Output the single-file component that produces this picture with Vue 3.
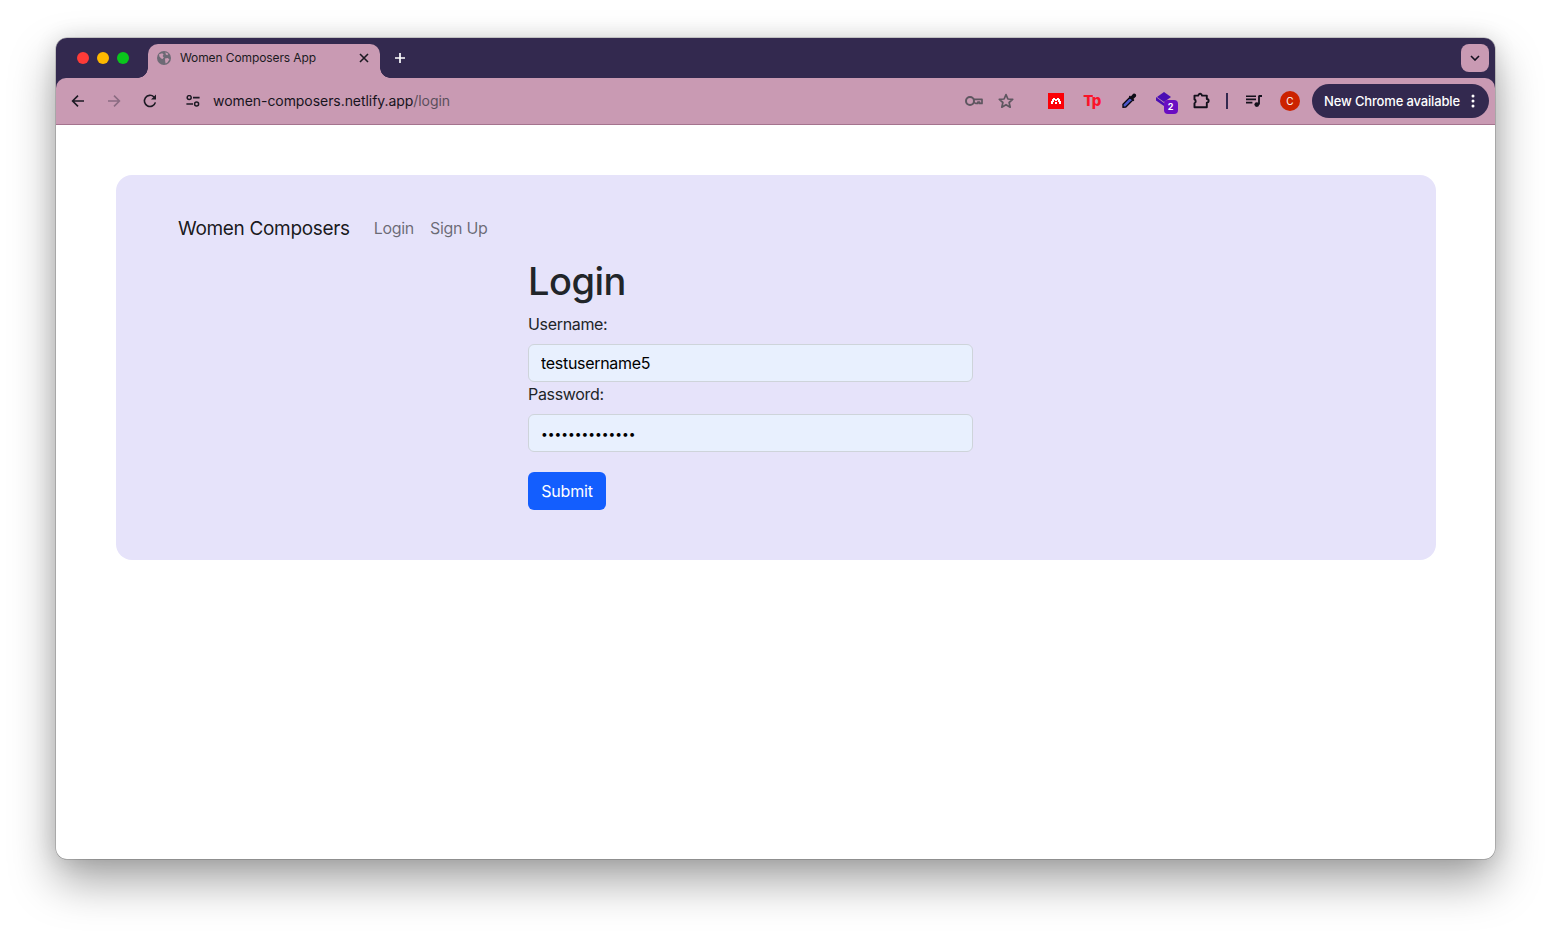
<script setup>
const title = 'Women Composers App'
</script>

<template>
  <div class="page">
    <div class="window">
      <div class="strip">
        <div class="lights">
          <span class="light red"></span>
          <span class="light yellow"></span>
          <span class="light green"></span>
        </div>
        <div class="tab">
          <svg class="globe" viewBox="0 0 14 14" width="14" height="14">
            <circle cx="7" cy="7" r="7" fill="#6d6a75" />
            <path d="M2 3.2 L5.2 2.2 L6.6 3.4 L5.6 5 L6.8 6.4 L5.6 8 L4.2 7.6 L2.4 5.6 Z M8.4 1.2 L11.4 2.8 L10.4 4.2 L8.8 3.6 Z M8 7.4 L10.8 7 L12.4 8.6 L10.4 11.6 L8.6 12.6 L8.2 10.4 Z" fill="#c99ab3" />
          </svg>
          <span class="tab-title">{{ title }}</span>
          <svg class="tab-close" viewBox="0 0 10 10" width="10" height="10">
            <path d="M1 1 L9 9 M9 1 L1 9" stroke="#1c1a22" stroke-width="1.6" fill="none" />
          </svg>
        </div>
        <svg class="plus" viewBox="0 0 12 12" width="12" height="12">
          <path d="M6 1 V11 M1 6 H11" stroke="#fff" stroke-width="1.7" fill="none" />
        </svg>
        <div class="chevron">
          <svg viewBox="0 0 10 6" width="10" height="6">
            <path d="M1 1 L5 5 L9 1" stroke="#14101f" stroke-width="1.6" fill="none" />
          </svg>
        </div>
      </div>

      <div class="toolbar">
        <span class="tool">
          <svg viewBox="0 0 14 14" width="14" height="14"><path d="M13 7 H2 M7 1.6 L1.6 7 L7 12.4" stroke="#1d1a24" stroke-width="1.6" fill="none" /></svg>
        </span>
        <span class="tool">
          <svg viewBox="0 0 14 14" width="14" height="14"><path d="M1 7 H12 M7 1.6 L12.4 7 L7 12.4" stroke="#8b6b82" stroke-width="1.6" fill="none" /></svg>
        </span>
        <span class="tool">
          <svg viewBox="0 0 14 14" width="14" height="14"><path d="M12.4 8.4 A5.6 5.6 0 1 1 11 3" stroke="#1d1a24" stroke-width="1.6" fill="none" /><path d="M13 .6 V5.6 H8 Z" fill="#1d1a24" /></svg>
        </span>
        <span class="tune">
          <svg viewBox="0 0 14 12" width="14" height="12">
            <circle cx="3.2" cy="2.6" r="2" stroke="#1d1a24" stroke-width="1.5" fill="none" />
            <path d="M7 2.6 H13.6 M0.4 9 H7" stroke="#1d1a24" stroke-width="1.6" fill="none" />
            <circle cx="10.6" cy="9" r="2" stroke="#1d1a24" stroke-width="1.5" fill="none" />
          </svg>
        </span>
        <span class="url">women-composers.netlify.app<span class="url-path">/login</span></span>

        <span class="tool key">
          <svg viewBox="0 0 18 10" width="18" height="10">
            <circle cx="5" cy="5" r="4" stroke="#5e5660" stroke-width="2" fill="none" />
            <path d="M9 3.4 H17 V7.4 H14.6 V6.2 H12.8 V7.4 H10.6 L9 6.4" stroke="#5e5660" stroke-width="1.7" fill="none" stroke-linejoin="round" />
          </svg>
        </span>
        <span class="tool star">
          <svg viewBox="0 0 16 16" width="16" height="16">
            <path d="M8 1.6 L9.9 6 L14.7 6.4 L11.1 9.5 L12.2 14.2 L8 11.7 L3.8 14.2 L4.9 9.5 L1.3 6.4 L6.1 6 Z" stroke="#5e5660" stroke-width="1.7" fill="none" stroke-linejoin="round" />
          </svg>
        </span>
        <span class="tool ext-first">
          <svg viewBox="0 0 16 16" width="16" height="16" shape-rendering="crispEdges">
            <rect width="16" height="16" fill="#fb0007" />
            <path d="M5 5 H7 V6 H9 V5 H11 V6 H12 V8 H13 V11 H11 V9 H10 V7 H9 V8 H7 V7 H6 V9 H5 V11 H3 V8 H4 V6 H5 Z M7 9 H9 V11 H7 Z" fill="#fff" />
          </svg>
        </span>
        <span class="tool tp">Tp</span>
        <span class="tool shift1">
          <svg viewBox="0 0 16 16" width="16" height="16">
            <path d="M9 4.2 L11.8 7 L4.8 14 L2 14.4 L2 11.2 Z" fill="#4a55c8" stroke="#0e0c16" stroke-width="1.4" stroke-linejoin="round" />
            <path d="M7.8 3.6 L12.4 8.2 L13.4 7 L12.4 6 L15 3.4 A2 2 0 0 0 12.2 .8 L9.8 3.4 L9 2.4 Z" fill="#0e0c16" />
          </svg>
        </span>
        <span class="tool shift2">
          <span class="stack">
            <svg viewBox="0 0 16 14" width="16" height="14">
              <path d="M8 0 L15 5 L8 10 L1 5 Z" fill="#4a0db4" />
              <path d="M0 5 L8 11 L8 14 L0 8.5 Z" fill="#4a0db4" />
            </svg>
            <span class="badge">2</span>
          </span>
        </span>
        <span class="tool shift1">
          <svg viewBox="0 0 16 16" width="17" height="17">
            <path d="M1.4 3.4 H5 A1.7 1.7 0 1 1 8.4 3.4 H13 V6.6 A1.7 1.7 0 1 1 13 10 V14.4 H1.4 V10.6 A2 2 0 0 0 1.4 7 Z" stroke="#14101c" stroke-width="1.8" fill="none" stroke-linejoin="round" />
          </svg>
        </span>
        <span class="divider-box"><span class="divider"></span></span>
        <span class="tool">
          <svg viewBox="0 0 16 12" width="16" height="12">
            <path d="M0 1.2 H10 M0 4.4 H10 M0 7.6 H6.4" stroke="#14101c" stroke-width="1.6" fill="none" />
            <path d="M13 1 H16 M13 0.6 V9.6" stroke="#14101c" stroke-width="1.8" fill="none" />
            <circle cx="10.8" cy="9.6" r="2.4" fill="#14101c" />
          </svg>
        </span>
        <span class="tool">
          <span class="avatar">C</span>
        </span>
        <div class="update">
          <span>New Chrome available</span>
          <svg viewBox="0 0 4 14" width="4" height="14">
            <circle cx="2" cy="2" r="1.5" fill="#fff" />
            <circle cx="2" cy="7" r="1.5" fill="#fff" />
            <circle cx="2" cy="12" r="1.5" fill="#fff" />
          </svg>
        </div>
      </div>

      <div class="content">
        <div class="card">
          <nav class="nav">
            <a class="brand">Women Composers</a>
            <a class="link">Login</a>
            <a class="link">Sign Up</a>
          </nav>
          <form class="form" @submit.prevent>
            <h1>Login</h1>
            <label for="username">Username:</label>
            <input id="username" type="text" value="testusername5" />
            <label for="password">Password:</label>
            <input id="password" type="password" value="abcdefghijklmn" />
            <button type="submit">Submit</button>
          </form>
        </div>
      </div>
    </div>
  </div>
</template>

<style>
html, body { margin: 0; background: #fff; }
</style>

<style scoped>
* { box-sizing: border-box; }
.page {
  width: 1551px;
  height: 933px;
  padding: 38px 56px 74px;
  background: #fff;
  overflow: hidden;
  font-family: Inter, "Liberation Sans", sans-serif;
}
.window {
  width: 1439px;
  height: 821px;
  border-radius: 11px;
  background: #fff;
  display: flex;
  flex-direction: column;
  overflow: hidden;
  box-shadow: 0 0 0 .5px rgba(0,0,0,.3), 0 22px 46px rgba(0,0,0,.36), 0 0 22px rgba(0,0,0,.12);
}
.strip {
  position: relative;
  height: 50px;
  margin-bottom: -10px;
  flex: none;
  background: #33294f;
  display: flex;
  align-items: flex-start;
  padding-top: 6px;
}
.lights {
  display: flex;
  gap: 8px;
  margin: 8px 0 0 21px;
}
.light { width: 12px; height: 12px; border-radius: 50%; }
.red { background: #fe3b38; }
.yellow { background: #feb900; }
.green { background: #0ac61c; }
.tab {
  position: relative;
  z-index: 2;
  width: 232px;
  height: 34px;
  margin-left: 19px;
  background: #c99ab3;
  border-radius: 10px 10px 0 0;
  display: flex;
  align-items: center;
  padding: 0 11px 6px 9px;
  color: #1c1a22;
  font-size: 12px;
}
.tab::before, .tab::after {
  content: "";
  position: absolute;
  bottom: 0;
  width: 10px;
  height: 10px;
  background: radial-gradient(circle at var(--cx) 0, #33294f 9.5px, #c99ab3 10px);
}
.tab::before { left: -10px; --cx: 0; }
.tab::after { right: -10px; --cx: 100%; }
.globe { flex: none; }
.tab-title { margin-left: 9px; flex: 1; white-space: nowrap; letter-spacing: -.1px; margin-top: -2px; }
.plus { margin: 8px 0 0 14px; }
.chevron {
  margin-left: auto;
  margin-right: 6px;
  width: 28px;
  height: 28px;
  border-radius: 8px;
  background: #c99ab3;
  display: flex;
  align-items: center;
  justify-content: center;
}
.toolbar {
  position: relative;
  z-index: 1;
  height: 47px;
  flex: none;
  background: #c99ab3;
  border-bottom: 1px solid #a4738e;
  border-radius: 10px 10px 0 0;
  display: flex;
  align-items: center;
  padding: 0 6px 1px 4px;
}
.tool {
  width: 36px;
  height: 32px;
  flex: none;
  display: flex;
  align-items: center;
  justify-content: center;
}
.tune {
  width: 14px;
  height: 12px;
  margin-left: 18px;
  display: flex;
  flex: none;
}
.url {
  flex: 1;
  margin-left: 13px;
  font-size: 14px;
  letter-spacing: -.06px;
  color: #17141d;
  white-space: nowrap;
}
.url-path { color: #5b4f5c; }
.key { width: 36px; margin-right: -2px; }
.star { width: 32px; margin-right: 16px; }
.tp {
  font-weight: 800;
  font-size: 15px;
  letter-spacing: -.8px;
  color: #fb1328;
}
.shift1 { padding-left: 2px; }
.shift2 { padding-left: 3px; }
.stack { position: relative; display: block; width: 16px; height: 14px; margin-left: -4px; margin-top: -4px; }
.stack svg { display: block; }
.badge {
  position: absolute;
  left: 8px;
  top: 8px;
  width: 14px;
  height: 14px;
  border-radius: 4px;
  background: #6a0dc2;
  color: #fff;
  font-size: 9px;
  font-weight: 700;
  line-height: 14px;
  text-align: center;
}
.divider-box {
  width: 18px;
  flex: none;
  display: flex;
  justify-content: center;
}
.divider { width: 2px; height: 16px; background: #33294f; }
.avatar {
  width: 20px;
  height: 20px;
  border-radius: 50%;
  background: #cc2200;
  color: #fff;
  font-size: 10px;
  line-height: 20px;
  text-align: center;
}
.update {
  width: 177px;
  height: 34px;
  margin-left: 4px;
  flex: none;
  border-radius: 17px;
  background: #33294f;
  color: #fff;
  font-size: 13px;
  font-weight: 500;
  letter-spacing: -.15px;
  display: flex;
  align-items: center;
  justify-content: space-between;
  padding: 0 14px 0 12px;
  white-space: nowrap;
}
.content {
  flex: 1;
  padding: 50px 59px 0 60px;
}
.card {
  height: 385px;
  border-radius: 16px;
  background: #e6e3fa;
  padding: 37px 0 0 62px;
}
.nav {
  display: flex;
  align-items: center;
  height: 32px;
}
.brand { font-size: 19px; letter-spacing: -.33px; color: rgba(0,0,0,.9); margin: 2px 24px 0 0; line-height: 30px; }
.link { font-size: 16px; letter-spacing: -.3px; color: rgba(0,0,0,.55); margin-right: 16px; }
.form {
  width: 445px;
  margin: 0 0 0 350px;
  display: flex;
  flex-direction: column;
  align-items: flex-start;
  color: #212529;
}
h1 {
  margin: 13px 0 7px;
  font-size: 38px;
  font-weight: 500;
  letter-spacing: -.5px;
  line-height: 48px;
}
label {
  font-size: 16px;
  letter-spacing: -.33px;
  line-height: 24px;
  margin-bottom: 8px;
}
input {
  width: 445px;
  height: 38px;
  padding: 0 12px;
  border: 1px solid #ced4da;
  border-radius: 6px;
  background: #e8f0fe;
  color: #000;
  font-family: inherit;
  font-size: 16px;
  letter-spacing: -.3px;
  outline: none;
}
#password { font-size: 12px; letter-spacing: 0; }
#password + button { margin-top: 20px; }
button {
  width: 78px;
  height: 38px;
  border: none;
  border-radius: 6px;
  background: #135efe;
  color: #fff;
  font-family: inherit;
  font-size: 16px;
  letter-spacing: -.2px;
}
</style>
